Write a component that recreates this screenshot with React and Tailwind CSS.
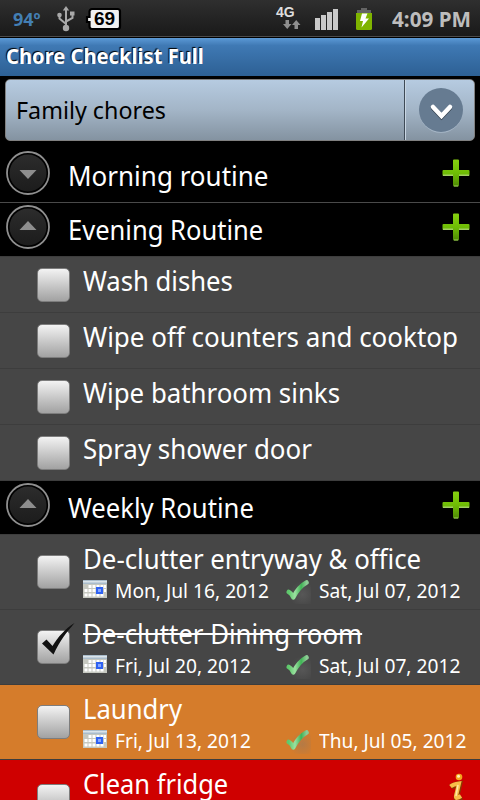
import React, { useState } from 'react';

const initialGroups = [
  { id: 'morning', name: 'Morning routine', fit: 'scale-x-[0.963]', open: false, chores: [] },
  {
    id: 'evening',
    name: 'Evening Routine',
    fit: 'scale-x-[0.946]',
    open: true,
    chores: [
      { id: 1, name: 'Wash dishes', fit: 'scale-x-[0.95]' },
      { id: 2, name: 'Wipe off counters and cooktop', fit: 'scale-x-[0.962]' },
      { id: 3, name: 'Wipe bathroom sinks', fit: 'scale-x-[0.957]' },
      { id: 4, name: 'Spray shower door', fit: 'scale-x-[0.96]' },
    ],
  },
  {
    id: 'weekly',
    name: 'Weekly Routine',
    fit: 'scale-x-[0.95]',
    open: true,
    chores: [
      { id: 5, name: 'De-clutter entryway & office', fit: 'scale-x-[0.956]', due: 'Mon, Jul 16, 2012', last: 'Sat, Jul 07, 2012' },
      { id: 6, name: 'De-clutter Dining room', fit: 'scale-x-[0.955]', due: 'Fri, Jul 20, 2012', last: 'Sat, Jul 07, 2012', done: true },
      { id: 7, name: 'Laundry', fit: 'scale-x-[0.95]', due: 'Fri, Jul 13, 2012', last: 'Thu, Jul 05, 2012', status: 'due' },
      { id: 8, name: 'Clean fridge', fit: 'scale-x-[0.943]', status: 'overdue', info: true },
    ],
  },
];

const rowColors = {
  due: 'bg-[#d57c2b]',
  overdue: 'bg-[#cf0000]',
};

const UsbIcon = () => (
  <svg width="18" height="26" viewBox="0 0 18 26" fill="none" stroke="#a9a9a9" strokeWidth="2">
    <path d="M9 4v17M2.500 9v3.500L9 18M15.500 8v4L9 15.500" />
    <path d="M9 0l3.200 4.500H5.800z" fill="#a9a9a9" stroke="none" />
    <circle cx="2.500" cy="9" r="2.300" fill="#a9a9a9" stroke="none" />
    <path d="M13 5.500h4.500v4H13z" fill="#a9a9a9" stroke="none" />
    <circle cx="9" cy="22" r="3.200" fill="#a9a9a9" stroke="none" />
  </svg>
);

const StatusBar = () => (
  <div className="flex h-[38px] items-center border-b border-black bg-linear-to-b from-[#2f2f2f] to-[#191919] shadow-[inset_0_-1px_0_#4b4b4b]">
    <span className="ml-[13px] w-[28px] text-[18px] leading-[36px] font-bold text-[#437fb4]">94º</span>
    <span className="ml-[16px]"><UsbIcon /></span>
    <span className="relative ml-[10px] flex h-[24px] w-[37px] items-center">
      <svg className="absolute inset-0" width="37" height="24" viewBox="0 0 37 24">
        <path d="M7 2h25.500a2.500 2.500 0 0 1 2.500 2.500v15a2.500 2.500 0 0 1-2.500 2.500H7a2.500 2.500 0 0 1-2.500-2.500V15H2v-5h2.500V4.500A2.500 2.500 0 0 1 7 2z" fill="#f1f1f1" stroke="#000" strokeWidth="2.200" />
      </svg>
      <span className="relative ml-[9px] font-['Liberation_Sans',sans-serif] text-[19px] leading-[24px] font-bold text-black">69</span>
    </span>
    <div className="ml-auto flex items-center pr-[9px]">
      <span className="flex h-[24px] w-[26px] flex-col">
        <span className="h-[12px] font-['Liberation_Sans',sans-serif] text-[14px] leading-[11px] font-bold text-[#dedede]">4G</span>
        <svg className="ml-[7px]" width="18" height="11" viewBox="0 0 18 11" fill="#8f8f8f">
          <path d="M2.500 1h3.500v4h2.500L4.200 10 0 5h2.500z" />
          <path d="M11.500 10H15V6h2.500L13.200 1 9 6h2.500z" />
        </svg>
      </span>
      <svg className="ml-[13px]" width="24" height="22" viewBox="0 0 24 22">
        <path d="M0 10h5v12H0zM6 7h5v15H6zM12 4h5v18h-5zM18 1h5v21h-5z" fill="#c9c9c9" />
      </svg>
      <svg className="ml-[17px]" width="16" height="24" viewBox="0 0 16 24">
        <path d="M5 1h6v3H5zM1 3h14v4H1z" fill="#646464" />
        <path d="M0 6h16v15.500a1.500 1.500 0 0 1-1.500 1.500h-13A1.500 1.500 0 0 1 0 21.500z" fill="#7fb400" />
        <path d="M6 6.500h5.500L9.500 11.500H13L5.500 20.500l1.500-6.500H4z" fill="#fff" />
      </svg>
      <span className="ml-[20px] w-[79px] text-[21px] leading-[36px] font-bold whitespace-nowrap text-[#bdbdbd]">
        <span className="inline-block origin-left scale-x-[0.985]">4:09 PM</span>
      </span>
    </div>
  </div>
);

const ListPicker = ({ value }) => (
  <button className="mx-[5px] mt-[3px] flex h-[62px] w-[470px] overflow-hidden rounded-[5px] border border-[#808080] bg-linear-to-b from-[#b6cbe1] via-[#a3b5c7] to-[#8493a1] text-left">
    <span className="h-full flex-1 border-r border-[#3e4a56] pl-[10px] text-[24px] leading-[60px] text-black">
      <span className="inline-block origin-left scale-x-[0.97]">{value}</span>
    </span>
    <span className="flex h-full w-[69px] items-center justify-center border-l border-[#c9d6e3] pl-[2px]">
      <svg width="46" height="46" viewBox="0 0 46 46" fill="none">
        <circle cx="23" cy="23.800" r="22" fill="#a9b9c9" />
        <circle cx="23" cy="23" r="22" fill="#667b91" />
        <path d="M15 21l8.500 9 8.500-9" stroke="#35424f" strokeWidth="4.500" strokeLinecap="round" />
        <path d="M15 20l8.500 9 8.500-9" stroke="#fff" strokeWidth="4.500" strokeLinecap="round" />
      </svg>
    </span>
  </button>
);

const Expander = ({ open }) => (
  <svg width="44" height="44" viewBox="0 0 44 44">
    <defs>
      <linearGradient id="knob" x1="0" y1="0" x2="0" y2="1">
        <stop offset="0" stopColor="#2c2c2c" />
        <stop offset="1" stopColor="#1c1c1c" />
      </linearGradient>
    </defs>
    <circle cx="22" cy="22" r="21" fill="#000" stroke="#8f8f8f" strokeWidth="1.800" />
    <circle cx="22" cy="22" r="18.500" fill="url(#knob)" />
    {open ? <path d="M22 16l8.500 9h-17z" fill="#8e8e8e" /> : <path d="M22 28l8.500-9h-17z" fill="#8e8e8e" />}
  </svg>
);

const PlusIcon = () => (
  <svg width="28" height="28" viewBox="0 0 28 28">
    <defs>
      <linearGradient id="plus" x1="0" y1="0" x2="0" y2="1">
        <stop offset="0" stopColor="#86cf10" />
        <stop offset="0.500" stopColor="#6fbd05" />
        <stop offset="1" stopColor="#4f8a05" />
      </linearGradient>
    </defs>
    <path d="M12 0.500h4a1 1 0 0 1 1 1V11h9.500a1 1 0 0 1 1 1v4a1 1 0 0 1-1 1H17v9.500a1 1 0 0 1-1 1h-4a1 1 0 0 1-1-1V17H1.500a1 1 0 0 1-1-1v-4a1 1 0 0 1 1-1H11V1.500a1 1 0 0 1 1-1z" fill="url(#plus)" />
    <path d="M1 15.500h10v1.500H1zM17 15.500h10v1.500H17zM12 26.500h4v1h-4z" fill="#a2cf62" />
  </svg>
);

const CalendarIcon = () => (
  <svg width="24" height="18" viewBox="0 0 24 18">
    <path d="M0 0h24v18H0z" fill="#c6c8c0" />
    <path d="M0 0h24v4H0z" fill="#a9bccb" />
    <path d="M0 1h24v1.500H0z" fill="#dbe4ea" />
    <g fill="#fff">
      <path d="M5.500 5h3v3h-3zM9.500 5h3v3h-3zM13.500 5h3v3h-3zM17.500 5h3v3h-3zM21 5h2v3h-2z" />
      <path d="M1.500 9h3v3h-3zM5.500 9h3v3h-3zM9.500 9h3v3h-3zM21 9h2v3h-2z" />
      <path d="M1.500 13.500h3v3h-3zM5.500 13.500h3v3h-3zM9.500 13.500h3v3h-3zM13.500 13.500h3v3h-3zM17.500 13.500h3v3h-3z" />
    </g>
    <path d="M13 7h7v7h-7z" fill="#2f62f2" />
    <path d="M15 9h3v3h-3z" fill="#86a6ff" />
  </svg>
);

const DoneIcon = () => (
  <svg width="25" height="25" viewBox="0 0 25 25" fill="none">
    <defs>
      <linearGradient id="tick" x1="0" y1="0" x2="1" y2="0">
        <stop offset="0" stopColor="#5fc96c" />
        <stop offset="0.350" stopColor="#9be0a0" />
        <stop offset="0.700" stopColor="#3fb455" />
        <stop offset="1" stopColor="#8ccb94" />
      </linearGradient>
      <radialGradient id="tickShade" cx="0.650" cy="0.600" r="0.550">
        <stop offset="0" stopColor="#777" stopOpacity="0.350" />
        <stop offset="1" stopColor="#777" stopOpacity="0" />
      </radialGradient>
    </defs>
    <path d="M1 1h24v24H1z" fill="url(#tickShade)" />
    <path d="M2.800 13c2 1 3.500 3 4.500 5.300C10 13 15 6.500 20.500 3.500" stroke="url(#tick)" strokeWidth="4.600" strokeLinejoin="round" strokeLinecap="round" />
  </svg>
);

const InfoIcon = () => (
  <svg width="16" height="32" viewBox="0 0 16 32" fill="none">
    <circle cx="10" cy="4" r="3.300" fill="#f3a51e" />
    <circle cx="9.500" cy="3.200" r="1.500" fill="#fff0c0" />
    <path d="M2 14c2.500-2 5-2.500 8.500-3L7.500 24c-.5 3 2 2 5 0" stroke="#8a3a00" strokeWidth="5.500" />
    <path d="M1.500 13.500c2.500-2 5-2.500 8.500-3L7 23c-.5 3 2 2 5 0" stroke="#f8bd48" strokeWidth="4" />
    <path d="M9 12L7 23" stroke="#ffe7a6" strokeWidth="1.500" />
  </svg>
);

const Checkbox = ({ checked, onClick }) => (
  <button onClick={onClick} className="relative h-[34px] w-[33px] rounded-[5px] border-[1.5px] border-[#7d7d7d] bg-linear-to-b from-[#f3f3f3] to-[#a2a2a2]">
    {checked && (
      <svg className="absolute -top-[8px] left-[3px]" width="36" height="34" viewBox="0 0 36 34">
        <path d="M1 20.500l4.500-4 6 6.500C17 14 24 6 33.500 0 26 9 18.500 18 12.500 31.500z" fill="#111" />
      </svg>
    )}
  </button>
);

const GroupHeader = ({ group, onToggle }) => (
  <div className="flex h-[53px] bg-black">
    <button onClick={onToggle} className="ml-[6px] h-[44px] pt-[2px]">
      <Expander open={group.open} />
    </button>
    <h2 className="ml-[18px] flex-1 pt-[9px] text-[27px] leading-[36px] whitespace-nowrap">
      <span className={`inline-block origin-left ${group.fit}`}>{group.name}</span>
    </h2>
    <button className="mr-[10px] h-[28px] pt-[10px]"><PlusIcon /></button>
  </div>
);

const ChoreRow = ({ chore, onToggle }) => (
  <div className={`flex border-t border-[#3d3d3d] ${chore.due ? 'h-[75px]' : 'h-[56px]'} ${rowColors[chore.status] || 'bg-[#464646]'}`}>
    <div className={`ml-[37px] w-[46px] shrink-0 ${chore.info ? 'pt-[24px]' : chore.due ? 'pt-[20px]' : 'pt-[11px]'}`}>
      <Checkbox checked={chore.done} onClick={onToggle} />
    </div>
    <div className="min-w-0 flex-1 pt-[6px]">
      <div className="h-[38px] text-[27px] leading-[36px] whitespace-nowrap">
        <span className={`inline-block origin-left ${chore.fit} ${chore.done ? 'line-through decoration-2' : ''}`}>{chore.name}</span>
      </div>
      {chore.due && (
        <div className="flex h-[26px] text-[19px] leading-[24px] whitespace-nowrap">
          <span className="w-[32px] shrink-0 pt-[1px]"><CalendarIcon /></span>
          <span className="w-[171px] shrink-0"><span className="inline-block origin-left scale-x-[1.01]">{chore.due}</span></span>
          <span className="w-[33px] shrink-0"><DoneIcon /></span>
          <span className="inline-block origin-left scale-x-[1.01]">{chore.last}</span>
        </div>
      )}
    </div>
    {chore.info && <span className="mr-[15px] pt-[13px]"><InfoIcon /></span>}
  </div>
);

const App = () => {
  const [groups, setGroups] = useState(initialGroups);

  const toggleGroup = (id) => {
    setGroups(groups.map((g) => (g.id === id ? { ...g, open: !g.open } : g)));
  };

  const toggleChore = (id) => {
    setGroups(groups.map((g) => ({
      ...g,
      chores: g.chores.map((c) => (c.id === id ? { ...c, done: !c.done } : c)),
    })));
  };

  return (
    <div className="h-[800px] w-[480px] overflow-hidden bg-black font-['Noto_Sans',sans-serif] text-white">
      <StatusBar />
      {/* Title bar */}
      <div className="h-[38px] bg-linear-to-b from-[#5b99d6] via-[#3f79b4] via-20% to-[#2d6094] pl-[6px] text-[21px] leading-[37px] font-bold whitespace-nowrap [text-shadow:-1px_-1px_1px_#000]">
        <span className="inline-block origin-left scale-x-[0.96]">Chore Checklist Full</span>
      </div>
      <ListPicker value="Family chores" />

      <div className="mt-[8px]">
        {groups.map((group) => (
          <div key={group.id} className={group.open ? '' : 'border-b border-[#4a4a4a]'}>
            <GroupHeader group={group} onToggle={() => toggleGroup(group.id)} />
            {group.open && (
              <div className="border-b border-[#3d3d3d]">
                {group.chores.map((chore) => (
                  <ChoreRow key={chore.id} chore={chore} onToggle={() => toggleChore(chore.id)} />
                ))}
              </div>
            )}
          </div>
        ))}
      </div>
    </div>
  );
};

export default App;
